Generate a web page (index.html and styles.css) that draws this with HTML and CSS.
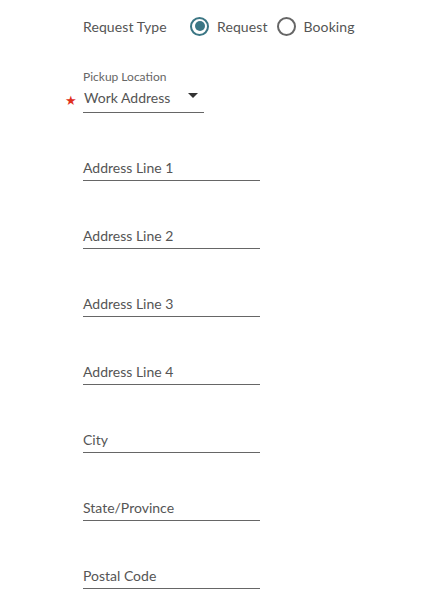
FILE: index.html
```html
<!DOCTYPE html>
<html>
<head>
<meta charset="utf-8">
<link rel="stylesheet" href="styles.css">
</head>
<body>
<div class="form">
  <div class="type-row">
    <span class="type-label">Request Type</span>
    <label class="radio checked"><span class="dot"></span>Request</label>
    <label class="radio"><span class="dot"></span>Booking</label>
  </div>
  <div class="select-field">
    <span class="star">★</span>
    <div class="small-label">Pickup Location</div>
    <div class="select">
      <span>Work Address</span>
      <span class="caret"></span>
    </div>
  </div>
  <div class="field">Address Line 1</div>
  <div class="field">Address Line 2</div>
  <div class="field">Address Line 3</div>
  <div class="field">Address Line 4</div>
  <div class="field">City</div>
  <div class="field">State/Province</div>
  <div class="field">Postal Code</div>
</div>
</body>
</html>
```
FILE: styles.css
```css
html, body { margin: 0; padding: 0; background: #fff; }
body { font-family: "Lato", "Open Sans", sans-serif; color: #555; font-size: 14px; }
.form { padding-left: 83px; display: flex; flex-direction: column; }
.type-row { height: 52px; display: flex; align-items: center; letter-spacing: 0.1px; }
.type-label { width: 107px; }
.radio { display: flex; align-items: center; margin-right: 9px; }
.radio .dot { width: 15px; height: 15px; border: 2px solid #666; border-radius: 50%; margin-right: 8px; box-sizing: content-box; position: relative; }
.radio.checked .dot { border-color: #3b7684; }
.radio.checked .dot::after { content: ""; position: absolute; left: 2.5px; top: 2.5px; width: 10px; height: 10px; border-radius: 50%; background: #3b7684; }
.select-field { position: relative; margin-top: 18px; width: 121px; }
.small-label { font-size: 12px; line-height: 14px; color: #666; }
.select { display: flex; justify-content: space-between; align-items: center; height: 29px; border-bottom: 1px solid #666; padding-left: 1px; padding-right: 6px; padding-bottom: 1px; box-sizing: border-box; }
.caret { width: 0; height: 0; border-left: 5px solid transparent; border-right: 5px solid transparent; border-top: 5px solid #333; margin-bottom: 4px; }
.star { position: absolute; left: -18px; top: 22px; color: #e0301e; font-size: 13px; }
.field { width: 177px; box-sizing: border-box; border-bottom: 1px solid #666; margin-top: 44px; height: 24px; line-height: 20px; padding-top: 1px; }
```
